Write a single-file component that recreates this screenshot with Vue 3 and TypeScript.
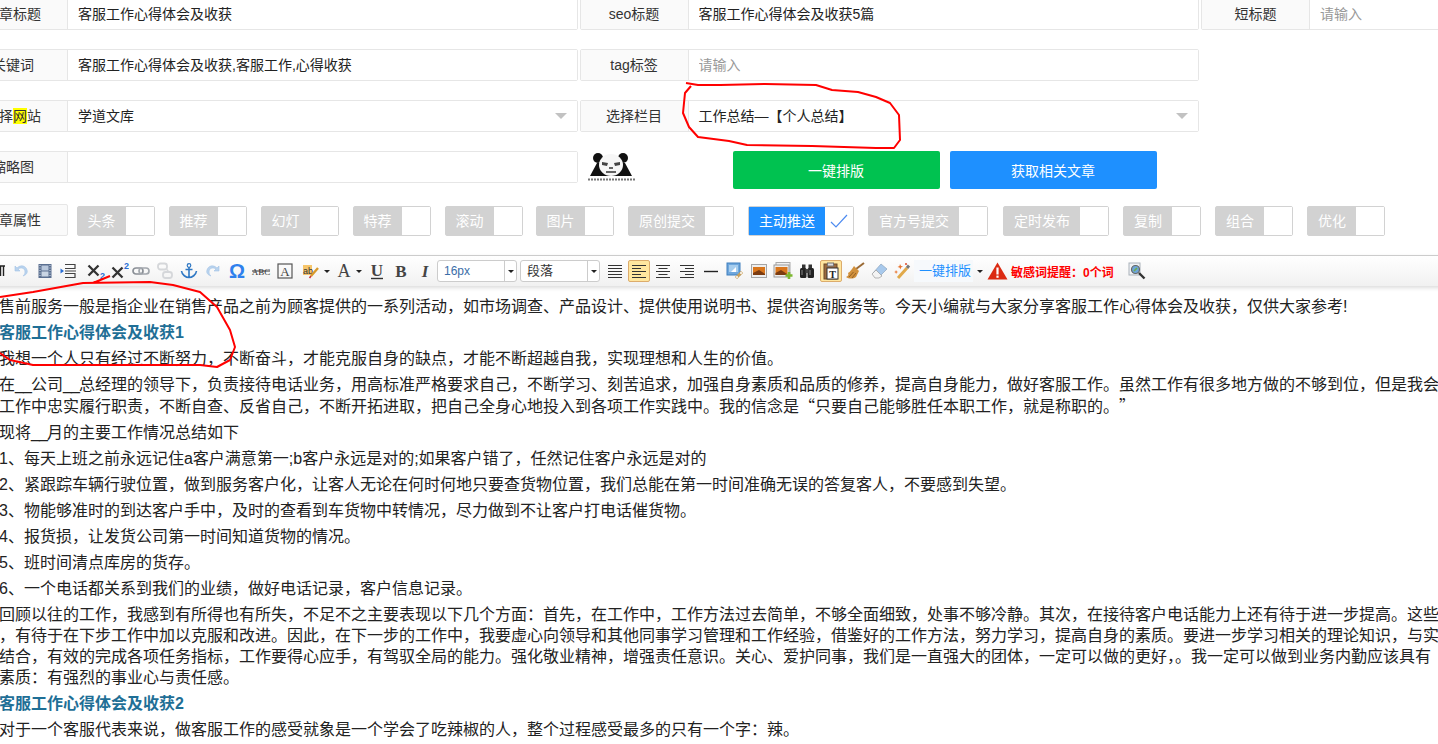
<template>
  <div class="page">
    <div class="form">
      <div class="row">
        <div class="group">
          <label>文章标题</label>
          <input value="客服工作心得体会及收获" />
        </div>
        <div class="group">
          <label>seo标题</label>
          <input value="客服工作心得体会及收获5篇" />
        </div>
        <div class="group">
          <label>短标题</label>
          <input placeholder="请输入" />
        </div>
      </div>
      <div class="row">
        <div class="group">
          <label>关键词</label>
          <input value="客服工作心得体会及收获,客服工作,心得收获" />
        </div>
        <div class="group">
          <label>tag标签</label>
          <input placeholder="请输入" />
        </div>
      </div>
      <div class="row">
        <div class="group">
          <label>选择<mark>网</mark>站</label>
          <div class="select">学道文库<i class="arrow"></i></div>
        </div>
        <div class="group">
          <label>选择栏目</label>
          <div class="select">工作总结—【个人总结】<i class="arrow"></i></div>
        </div>
      </div>
      <div class="row thumbRow">
        <div class="group">
          <label>缩略图</label>
          <input />
        </div>
        <svg class="panda" viewBox="0 0 48 30">
          <circle cx="10" cy="6" r="5" fill="#111" />
          <circle cx="35" cy="6" r="5" fill="#111" />
          <path d="M2 24 L9 11 H37 L44 24 Z" fill="#111" />
          <ellipse cx="23" cy="13" rx="12" ry="11" fill="#f6f6f6" />
          <path d="M14 10 l6 1 -1 3 -5-1 Z M32 10 l-6 1 1 3 5-1 Z" fill="#444" />
          <path d="M21 16 h4 M18 20 h10" stroke="#333" stroke-width="1.5" />
          <path d="M0 27.5 H47" stroke="#777" stroke-width="2" stroke-dasharray="2 1" />
        </svg>
        <button type="button" class="btn green">一键排版</button>
        <button type="button" class="btn blue">获取相关文章</button>
      </div>
      <div class="row attrRow">
        <label class="attrLabel">文章属性</label>
        <div class="switches">
          <div
            v-for="item in switches"
            :key="item.name"
            class="switch"
            :class="{ on: item.on }"
            :style="item.nudge ? { marginLeft: item.nudge + 'px' } : undefined"
          >
            <span class="switchName">{{ item.name }}</span>
            <span class="switchBox">
              <svg v-if="item.on" width="20" height="16" viewBox="0 0 20 16">
                <path d="M2 9 L7 14 L18 2" fill="none" stroke="#4d8bf0" stroke-width="1.2" />
              </svg>
            </span>
          </div>
        </div>
      </div>
    </div>

    <div class="toolbar">
      <span class="tb"><svg width="18" height="16" viewBox="0 0 18 16"><path d="M11 3 H17 M12.5 3 V13 M15.5 3 V13" stroke="#222" stroke-width="1.4" fill="none" /><path d="M11 3 a3 3 0 0 0 0 6 Z" fill="#222" /></svg></span>
      <span class="tb"><svg width="16" height="16" viewBox="0 0 16 16"><path d="M2 3 V8 H7 L5 6 C8 4 12 5 12 9 C12 11 11 12 10 13 C13 12 15 10 14 7 C13 3 8 1 4 5 Z" fill="#b9d3ee" stroke="#a3c3e6" stroke-width=".6" /></svg></span>
      <span class="tb"><svg width="16" height="16" viewBox="0 0 16 16"><rect x="1.5" y="1" width="13" height="14" fill="#5a6f90" /><rect x="4.5" y="2.5" width="7" height="5" fill="#b9c8dc" /><rect x="4.5" y="8.5" width="7" height="5" fill="#c9d5e4" /><path d="M2.5 2.5 h1 M2.5 5 h1 M2.5 7.5 h1 M2.5 10 h1 M2.5 12.5 h1 M12.5 2.5 h1 M12.5 5 h1 M12.5 7.5 h1 M12.5 10 h1 M12.5 12.5 h1" stroke="#dde5ef" /></svg></span>
      <span class="tb"><svg width="18" height="16" viewBox="0 0 18 16"><path d="M5 1.5 H15 V5.5 H5 M5 10.5 H15 V14.5 H5 M5 8 H16" fill="none" stroke="#444" stroke-width="1.2" /><path d="M4 8 L0.5 5.5 V10.5 Z" fill="#2a6fd6" /></svg></span>
      <span class="tb"><svg width="24" height="18" viewBox="0 0 24 18"><path d="M7.5 3.5 L17.5 13.5 M17.5 3.5 L7.5 13.5" stroke="#333" stroke-width="2.3" /><text x="19" y="17" class="mini">2</text></svg></span>
      <span class="tb"><svg width="24" height="18" viewBox="0 0 24 18"><path d="M7.5 5.5 L17.5 15.5 M17.5 5.5 L7.5 15.5" stroke="#333" stroke-width="2.3" /><text x="19" y="7" class="mini">2</text></svg></span>
      <span class="tb"><svg width="18" height="16" viewBox="0 0 18 16"><rect x="1" y="5" width="10" height="6" rx="3" fill="none" stroke="#8a8f96" stroke-width="1.7" /><rect x="7" y="5" width="10" height="6" rx="3" fill="none" stroke="#a2a7ad" stroke-width="1.7" /></svg></span>
      <span class="tb"><svg width="16" height="18" viewBox="0 0 16 18"><rect x="1" y="1.5" width="9" height="6" rx="2.5" fill="none" stroke="#d5d7da" stroke-width="1.8" /><rect x="6" y="10" width="9" height="6" rx="2.5" fill="none" stroke="#d5d7da" stroke-width="1.8" /><path d="M10 7.5 L11.5 10" stroke="#d5d7da" stroke-width="1.5" /></svg></span>
      <span class="tb"><svg width="18" height="16" viewBox="0 0 18 16"><circle cx="9" cy="2.5" r="1.8" fill="none" stroke="#2f78c4" stroke-width="1.2" /><path d="M9 4 V14 M5.5 6.5 H12.5 M1.5 8 C2 12 6 14.5 9 14.5 C12 14.5 16 12 16.5 8" fill="none" stroke="#2f78c4" stroke-width="1.6" /></svg></span>
      <span class="tb"><svg width="16" height="16" viewBox="0 0 16 16" style="transform: scaleX(-1)"><path d="M2 3 V8 H7 L5 6 C8 4 12 5 12 9 C12 11 11 12 10 13 C13 12 15 10 14 7 C13 3 8 1 4 5 Z" fill="#b9d3ee" stroke="#a3c3e6" stroke-width=".6" /></svg></span>
      <span class="tb"><svg width="18" height="18" viewBox="0 0 18 18"><text x="9" y="16" text-anchor="middle" class="omega">Ω</text></svg></span>
      <span class="tb"><svg width="20" height="16" viewBox="0 0 20 16"><text x="10" y="12" text-anchor="middle" class="abc">ABC</text><path d="M1 8 H19" stroke="#333" /></svg></span>
      <span class="tb"><svg width="16" height="16" viewBox="0 0 16 16"><rect x="1" y="1" width="14" height="14" fill="none" stroke="#555" stroke-width="1.2" /><text x="8" y="13" text-anchor="middle" class="serif">A</text></svg></span>
      <span class="tb wide"><svg width="18" height="16" viewBox="0 0 18 16"><rect x="1" y="2" width="9" height="10" fill="#f6c56a" /><text x="1" y="10.5" class="ab">ab</text><path d="M9 13 L16 5" stroke="#d99a2b" stroke-width="2.4" /><path d="M9 13 L7.5 15" stroke="#c33" stroke-width="1.6" /></svg><i class="caret"></i></span>
      <span class="tb wide"><svg width="16" height="16" viewBox="0 0 16 16"><text x="8" y="14" text-anchor="middle" class="serifBig">A</text></svg><i class="caret"></i></span>
      <span class="tb"><svg width="16" height="17" viewBox="0 0 16 17"><text x="8" y="13" text-anchor="middle" class="serifBold">U</text><path d="M2 15.5 H14" stroke="#333" stroke-width="1.4" /></svg></span>
      <span class="tb"><svg width="16" height="16" viewBox="0 0 16 16"><text x="8" y="14" text-anchor="middle" class="serifBold">B</text></svg></span>
      <span class="tb"><svg width="16" height="16" viewBox="0 0 16 16"><text x="8" y="14" text-anchor="middle" class="serifItalic">I</text></svg></span>
      <div class="combo size"><span class="comboText">16px</span><span class="comboBtn"><i class="caret"></i></span></div>
      <div class="combo para"><span class="comboText">段落</span><span class="comboBtn"><i class="caret"></i></span></div>
      <span class="tb"><svg width="16" height="16" viewBox="0 0 16 16"><path d="M1 2.5 H15 M1 5.5 H15 M1 8.5 H15 M1 11.5 H15 M1 14.5 H15" stroke="#333" /></svg></span>
      <span class="tb"><span class="active"><svg width="16" height="16" viewBox="0 0 16 16"><path d="M1 2.5 H15 M1 5.5 H10 M1 8.5 H15 M1 11.5 H10 M1 14.5 H15" stroke="#333" /></svg></span></span>
      <span class="tb"><svg width="16" height="16" viewBox="0 0 16 16"><path d="M1 2.5 H15 M3.5 5.5 H12.5 M1 8.5 H15 M3.5 11.5 H12.5 M1 14.5 H15" stroke="#333" /></svg></span>
      <span class="tb"><svg width="16" height="16" viewBox="0 0 16 16"><path d="M1 2.5 H15 M6 5.5 H15 M1 8.5 H15 M6 11.5 H15 M1 14.5 H15" stroke="#333" /></svg></span>
      <span class="tb"><svg width="16" height="16" viewBox="0 0 16 16"><path d="M1 8.5 H15" stroke="#222" stroke-width="1.4" /></svg></span>
      <span class="tb"><svg width="18" height="18" viewBox="0 0 18 18"><rect x="1" y="1" width="13" height="12" fill="#6fa7dc" stroke="#3f7fbd" /><rect x="3" y="3" width="9" height="7" fill="#a6cdee" /><path d="M5 10 L10 5 V10 Z" fill="#fff" /><path d="M10 16 L16 10" stroke="#c9a15c" stroke-width="3" /><circle cx="11" cy="15" r="1" fill="#fff" /><circle cx="15" cy="11" r="1" fill="#fff" /></svg></span>
      <span class="tb"><svg width="16" height="14" viewBox="0 0 16 14"><rect x=".5" y=".5" width="15" height="13" fill="#eee" stroke="#a5a5a5" /><rect x="2" y="3" width="12" height="8" fill="#d9761c" /><path d="M2 9 L8 6 L14 10 V11 H2 Z" fill="#7b3b10" /></svg></span>
      <span class="tb"><svg width="20" height="18" viewBox="0 0 20 18"><rect x="3" y=".5" width="14" height="12" fill="#f1f1f1" stroke="#aaa" /><rect x="1" y="3" width="15" height="12" fill="#eee" stroke="#9a9a9a" /><rect x="2.5" y="5" width="12" height="8" fill="#d9761c" /><path d="M2.5 11 L8 8 L14 12 V13 H2.5 Z" fill="#7b3b10" /><path d="M16 10 V17 M12.5 13.5 H19.5" stroke="#7cb82f" stroke-width="2.6" /></svg></span>
      <span class="tb"><svg width="16" height="16" viewBox="0 0 16 16"><rect x="3" y="1.5" width="3.5" height="5" fill="#333" /><rect x="9.5" y="1.5" width="3.5" height="5" fill="#333" /><rect x="1" y="5" width="6.5" height="10" rx="1.5" fill="#222" /><rect x="8.5" y="5" width="6.5" height="10" rx="1.5" fill="#222" /><rect x="6.5" y="6" width="3" height="4" fill="#444" /><path d="M3 7 V12 M11 7 V12" stroke="#888" /></svg></span>
      <span class="tb"><span class="active"><svg width="18" height="18" viewBox="0 0 18 18"><rect x="2" y="2" width="13" height="15" fill="#9c6b3f" stroke="#6b4a2a" /><rect x="5.5" y="1" width="6" height="3" fill="#ddd" stroke="#777" /><rect x="5" y="6" width="11" height="11" fill="#fff" stroke="#333" /><text x="10.5" y="15.5" text-anchor="middle" class="pasteT">T</text></svg></span></span>
      <span class="tb"><svg width="20" height="18" viewBox="0 0 20 18"><path d="M19 1 L11 7" stroke="#9a6a35" stroke-width="2" /><path d="M9 4 L14 9 L11 15 C8 17 4 17 1 15 C3 14 4 13 3 11 C5 10 7 7 9 4 Z" fill="#d1913d" /><path d="M4 15 L8.5 10 M7 16 L11 11" stroke="#8b5a20" stroke-width=".9" /></svg></span>
      <span class="tb"><svg width="18" height="18" viewBox="0 0 18 18"><path d="M11 2 L17 7 L9 15 L3 11 Z" fill="#a8c9ec" stroke="#8da5bd" stroke-width=".7" /><path d="M6 8 L12 14 L9 16 H5 L2 12 Z" fill="#f3f3f3" stroke="#9a9a9a" stroke-width=".7" /></svg></span>
      <span class="tb"><svg width="18" height="18" viewBox="0 0 18 18"><path d="M4 16 L13 6" stroke="#e1a94a" stroke-width="3" /><path d="M13 6 L15 3.5" stroke="#777" stroke-width="3" /><path d="M6 2 l1 2 2 .5 -2 1 -.5 2 -1-2 -2-.5 2-1 Z" fill="#e8712a" /><path d="M2 8 l.7 1.4 1.4.5 -1.4.6 -.6 1.4 -.6-1.4 -1.4-.6 1.4-.5 Z" fill="#e8712a" /><circle cx="12" cy="2" r="1" fill="#e04a2a" /></svg></span>
      <span class="oneKey">一键排版</span>
      <span class="caretWrap"><i class="caret"></i></span>
      <svg class="warn" width="21" height="18" viewBox="0 0 21 18">
        <path d="M10.5 0.5 L20.5 17.5 H0.5 Z" fill="#db2a12" />
        <rect x="9.4" y="5.5" width="2.2" height="7" fill="#fff" />
        <rect x="9.4" y="13.6" width="2.2" height="2.2" fill="#fff" />
      </svg>
      <span class="sensitive">敏感词提醒：0个词</span>
      <svg class="search" width="18" height="18" viewBox="0 0 18 18">
        <rect x="1" y="1" width="11" height="12" fill="#eef1f4" stroke="#aab2ba" />
        <circle cx="7.5" cy="7.5" r="4" fill="#6ea6d8" stroke="#666" stroke-width="1.2" />
        <path d="M6 9 L9 6" stroke="#6fae4a" stroke-width="1.6" />
        <path d="M11 11 L16.5 16.5" stroke="#333" stroke-width="2.4" />
      </svg>
    </div>

    <div class="editor">
      <template v-for="(block, index) in article" :key="index">
        <h3 v-if="block.heading">{{ block.lines[0] }}</h3>
        <p v-else>
          <span v-for="line in block.lines" :key="line" class="line">
            <span v-for="(part, i) in splitLine(line)" :key="i" :class="partClass(part)">{{ part }}</span>
          </span>
        </p>
      </template>
    </div>

    <!-- 截图上的红圈批注 -->
    <svg class="scribble" width="1438" height="744" viewBox="0 0 1438 744">
      <path d="M686 83 L698 85 L720 85 L765 84 L816 85 L832 90 L858 92 L876 97 L890 103 L899 115 L900 140 L894 148 L876 148 L812 146 L747 145 L729 141 L698 137 L689 127 L683 113 L685 93 L691 86" />
      <path d="M110 276 L93 283 L83 283 L33 292 L0 297 M83 283 L150 282 L173 285 L200 292 L217 307 L230 330 L235 347 L230 360 L217 367 L200 365 L100 365 L33 365 L10 360 L0 353" />
    </svg>
  </div>
</template>

<script setup lang="ts">
type Block = { heading?: boolean; lines: string[] }
type SwitchItem = { name: string; on?: boolean; nudge?: number }

// nudge：个别开关和前一个的间距不一样
const switches: SwitchItem[] = [
  { name: '头条' },
  { name: '推荐' },
  { name: '幻灯' },
  { name: '特荐' },
  { name: '滚动' },
  { name: '图片', nudge: -1 },
  { name: '原创提交', nudge: 0.5 },
  { name: '主动推送', on: true },
  { name: '官方号提交' },
  { name: '定时发布', nudge: 1 },
  { name: '复制' },
  { name: '组合' },
  { name: '优化' },
]

const article: Block[] = [
  { lines: ['售前服务一般是指企业在销售产品之前为顾客提供的一系列活动，如市场调查、产品设计、提供使用说明书、提供咨询服务等。今天小编就与大家分享客服工作心得体会及收获，仅供大家参考!'] },
  { heading: true, lines: ['客服工作心得体会及收获1'] },
  { lines: ['我想一个人只有经过不断努力，不断奋斗，才能克服自身的缺点，才能不断超越自我，实现理想和人生的价值。'] },
  {
    lines: [
      '在__公司__总经理的领导下，负责接待电话业务，用高标准严格要求自己，不断学习、刻苦追求，加强自身素质和品质的修养，提高自身能力，做好客服工作。虽然工作有很多地方做的不够到位，但是我会在',
      '工作中忠实履行职责，不断自查、反省自己，不断开拓进取，把自己全身心地投入到各项工作实践中。我的信念是“只要自己能够胜任本职工作，就是称职的。”',
    ],
  },
  { lines: ['现将__月的主要工作情况总结如下'] },
  { lines: ['1、每天上班之前永远记住a客户满意第一;b客户永远是对的;如果客户错了，任然记住客户永远是对的'] },
  { lines: ['2、紧跟踪车辆行驶位置，做到服务客户化，让客人无论在何时何地只要查货物位置，我们总能在第一时间准确无误的答复客人，不要感到失望。'] },
  { lines: ['3、物能够准时的到达客户手中，及时的查看到车货物中转情况，尽力做到不让客户打电话催货物。'] },
  { lines: ['4、报货损，让发货公司第一时间知道货物的情况。'] },
  { lines: ['5、班时间清点库房的货存。'] },
  { lines: ['6、一个电话都关系到我们的业绩，做好电话记录，客户信息记录。'] },
  {
    lines: [
      '回顾以往的工作，我感到有所得也有所失，不足不之主要表现以下几个方面：首先，在工作中，工作方法过去简单，不够全面细致，处事不够冷静。其次，在接待客户电话能力上还有待于进一步提高。这些',
      '，有待于在下步工作中加以克服和改进。因此，在下一步的工作中，我要虚心向领导和其他同事学习管理和工作经验，借鉴好的工作方法，努力学习，提高自身的素质。要进一步学习相关的理论知识，与实',
      '结合，有效的完成各项任务指标，工作要得心应手，有驾驭全局的能力。强化敬业精神，增强责任意识。关心、爱护同事，我们是一直强大的团体，一定可以做的更好，。我一定可以做到业务内勤应该具有',
      '素质：有强烈的事业心与责任感。',
    ],
  },
  { heading: true, lines: ['客服工作心得体会及收获2'] },
  { lines: ['对于一个客服代表来说，做客服工作的感受就象是一个学会了吃辣椒的人，整个过程感受最多的只有一个字：辣。'] },
]

// 引号和下划线的宽度跟正文字体不一样，单独拆出来
const splitLine = (line: string) => line.split(/([“”]|__)/).filter(Boolean)
const partClass = (part: string) => {
  if (part === '__') return 'blank'
  if (part === '“' || part === '”') return 'quote'
  return ''
}
</script>

<style>
html,
body {
  margin: 0;
  overflow: hidden;
}
</style>

<style scoped>
.page {
  position: relative;
  width: 1438px;
  height: 744px;
  overflow: hidden;
  background: #fff;
  color: #333;
  font-family: "Liberation Sans", "Noto Sans CJK SC", sans-serif;
  font-size: 14px;
}

.form {
  margin: -2px 0 0 -42px;
}

.row {
  display: flex;
  gap: 2px;
  width: 1600px;
  height: 32px;
  margin-bottom: 19px;
}

.group {
  display: flex;
  flex: none;
  width: 619.5px;
  height: 32px;
  box-sizing: border-box;
  border: 1px solid #e6e6e6;
  border-radius: 2px;
}

.group label,
.attrLabel {
  flex: none;
  width: 109px;
  line-height: 30px;
  text-align: center;
  background: #fafafa;
  border-right: 1px solid #e6e6e6;
  box-sizing: border-box;
}

.group + .group label {
  width: 108px;
}

.group input,
.select {
  flex: 1;
  min-width: 0;
  padding: 0 10px;
  border: 0;
  outline: 0;
  font: inherit;
  color: #222;
  line-height: 30px;
  background: #fff;
}

.group input::placeholder {
  color: #999;
}

mark {
  background: #ff0;
  color: inherit;
}

.select {
  position: relative;
}

.arrow {
  position: absolute;
  right: 10px;
  top: 12px;
  border: 6px solid transparent;
  border-top-color: #c2c2c2;
  border-bottom: 0;
}

.thumbRow {
  height: 38px;
  margin-bottom: 15px;
  gap: 0;
}

.panda {
  flex: none;
  width: 48px;
  height: 30px;
  margin: 1px 0 0 10px;
}

.btn {
  flex: none;
  width: 207px;
  height: 38px;
  border: 0;
  border-radius: 2px;
  color: #fff;
  font: inherit;
}

.green {
  margin-left: 97px;
  background: #00c250;
}

.blue {
  margin-left: 10px;
  background: #1e90ff;
}

.attrRow {
  gap: 0;
  margin-bottom: 19px;
}

.attrLabel {
  height: 32px;
  width: 110px;
  border: 1px solid #e6e6e6;
  border-radius: 2px;
}

.switches {
  display: flex;
  gap: 14px;
  margin: 2px 0 0 8.5px;
}

.switch {
  display: flex;
  height: 30px;
  box-sizing: border-box;
  border: 1px solid #d2d2d2;
  border-radius: 2px;
  line-height: 28px;
}

.switchName {
  padding: 0 10px;
  background: #d2d2d2;
  color: #fff;
}

.switchBox {
  display: flex;
  align-items: center;
  justify-content: center;
  width: 28px;
  background: #fff;
}

.on .switchName {
  background: #1e90ff;
}

.toolbar {
  display: flex;
  align-items: center;
  height: 30px;
  margin-left: -15px;
  width: 1460px;
  border-top: 1px solid #ccc;
  background: linear-gradient(#fff, #f1f1f1);
  box-shadow: 0 2px 4px rgba(0, 0, 0, 0.14);
  position: relative;
}

.tb {
  flex: none;
  display: flex;
  align-items: center;
  justify-content: center;
  width: 24px;
  height: 24px;
}

.tb.wide {
  width: 34px;
  justify-content: flex-start;
  gap: 4px;
  padding-left: 5px;
  box-sizing: border-box;
}

.active {
  display: flex;
  align-items: center;
  justify-content: center;
  width: 22px;
  height: 22px;
  box-sizing: border-box;
  background: #ffe69f;
  border: 1px solid #dcac6c;
  border-radius: 2px;
}

.caret {
  display: block;
  flex: none;
  width: 0;
  height: 0;
  border-style: solid;
  border-color: #222 transparent transparent;
  border-width: 3px 3.5px 0;
}

.combo {
  flex: none;
  display: flex;
  width: 80px;
  height: 22px;
  box-sizing: border-box;
  border: 1px solid #ccc;
  border-radius: 3px;
  background: #fff;
  font-size: 13px;
  line-height: 20px;
}

.combo.para {
  margin: 0 3px;
}

.comboText {
  flex: 1;
  padding-left: 6px;
  color: #333;
}

.size .comboText {
  font-size: 12px;
  color: #3b6ea8;
}

.comboBtn {
  display: flex;
  align-items: center;
  justify-content: center;
  width: 9px;
  padding: 0 1px;
  border-left: 1px solid #ccc;
}

.oneKey {
  flex: none;
  margin-left: -1px;
  padding: 0 2px 0 5px;
  font-size: 13px;
  line-height: 22px;
  color: #1e90ff;
  background: #f6f9fc;
}

.caretWrap {
  flex: none;
  display: flex;
  justify-content: center;
  width: 14px;
}

.warn {
  flex: none;
}

.sensitive {
  flex: none;
  margin-left: 3px;
  font-size: 12px;
  font-weight: bold;
  color: #f00;
}

.search {
  flex: none;
  margin-left: 14px;
}

.mini {
  font: bold 9px "Liberation Sans", sans-serif;
  fill: #2a6fd6;
}

.omega {
  font: bold 20px "Liberation Sans", sans-serif;
  fill: #2f80ed;
}

.abc {
  font: 9px "Liberation Serif", serif;
  fill: #333;
}

.serif {
  font: 13px "Liberation Serif", serif;
  fill: #444;
}

.serifBig {
  font: 18px "Liberation Serif", serif;
  fill: #444;
}

.serifBold {
  font: bold 17px "Liberation Serif", serif;
  fill: #444;
}

.serifItalic {
  font: italic bold 17px "Liberation Serif", serif;
  fill: #444;
}

.ab {
  font: 9px "Liberation Sans", sans-serif;
  fill: #333;
}

.pasteT {
  font: bold 10px "Liberation Serif", serif;
  fill: #222;
}

.editor {
  width: 1500px;
  margin: 0 0 0 -1px;
  padding-top: 5px;
  font-size: 16px;
  line-height: 21px;
  color: #222;
}

.editor p,
.editor h3 {
  margin: 5px 0;
  font-size: 16px;
  white-space: nowrap;
}

.editor h3 {
  color: #1f6f96;
  font-weight: bold;
}

.line {
  display: block;
}

.quote {
  font-family: "Noto Sans CJK SC", sans-serif;
  display: inline-block;
  width: 16px;
  text-align: center;
}

.blank {
  letter-spacing: -0.9px;
}

.scribble {
  position: absolute;
  left: 0;
  top: 0;
  pointer-events: none;
}

.scribble path {
  fill: none;
  stroke: #f00;
  stroke-width: 2;
  stroke-linejoin: round;
}
</style>
